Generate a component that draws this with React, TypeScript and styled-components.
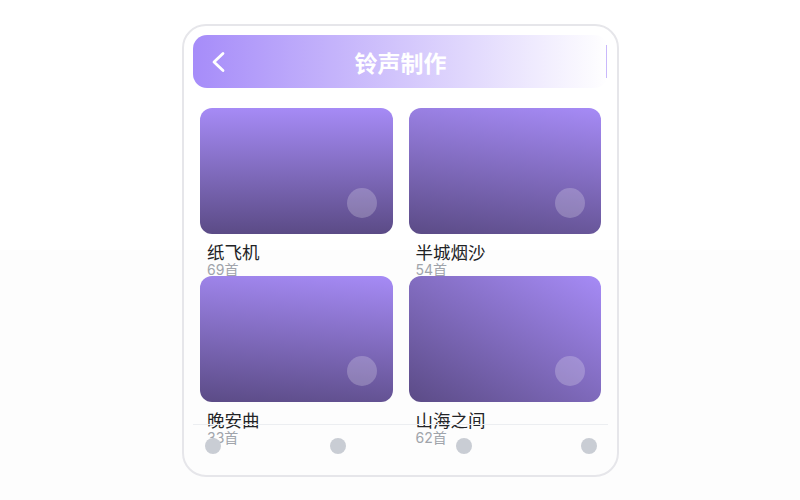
import styled, { createGlobalStyle } from "styled-components"

const GlobalStyle = createGlobalStyle`
html, body {
  margin: 0;
  padding: 0;
}
body {
  background: linear-gradient(180deg, #ffffff 0, #ffffff 250px, #fdfdfd 250px);
  font-family: Inter, "Noto Sans CJK SC", sans-serif;
}
`

const Stage = styled.div`
width: 800px;
height: 500px;
display: flex;
align-items: center;
justify-content: center;
`

const PhoneFrame = styled.div`
width: 437px;
height: 453px;
box-sizing: border-box;
border: 2px solid #e6e6ea;
border-radius: 24px;
padding: 9px 9px 0;
margin: 1px 0 0 1px;
position: relative;
overflow: hidden;
`

const Header = styled.header`
height: 53px;
border-radius: 14px;
background: linear-gradient(90deg, #a68cf9 0%, #ffffff 100%);
display: grid;
grid-template-columns: 44px 1fr 44px;
align-items: center;
`

const BackButton = styled.button`
width: 44px;
height: 53px;
border: none;
background: none;
padding: 0 0 0 5px;
display: flex;
align-items: center;
justify-content: center;
cursor: pointer;
`

const Title = styled.h1`
margin: 0;
text-align: center;
color: #ffffff;
font-family: Inter, "Noto Sans CJK SC", sans-serif;
font-size: 23px;
font-weight: 700;
`

const HeaderSlot = styled.div`
height: 33px;
border-right: 1px solid #c9b8fb;
margin-right: 1px;
`

const Grid = styled.div`
margin-top: 20px;
padding: 0 7px;
display: grid;
grid-template-columns: 1fr 1fr;
column-gap: 16px;
grid-auto-rows: 168px;
`

const Item = styled.div`
display: flex;
flex-direction: column;
min-width: 0;
`

const Cover = styled.div<{ $angle: number }>`
height: 126px;
border-radius: 12px;
background: linear-gradient(${(p) => p.$angle}deg, #a68bf6 0%, #5b4b86 100%);
position: relative;
flex-shrink: 0;
`

const PlayDot = styled.span`
position: absolute;
right: 16px;
bottom: 16px;
width: 30px;
height: 30px;
border-radius: 50%;
background: rgba(255, 255, 255, 0.22);
`

const Name = styled.div`
margin-top: 9px;
padding-left: 7px;
font-size: 17.5px;
line-height: 20px;
color: #222326;
white-space: nowrap;
`

const Count = styled.div`
padding-left: 7px;
font-size: 14px;
line-height: 14px;
color: #a0a4ab;
white-space: nowrap;
`

const BottomNav = styled.nav`
position: absolute;
left: 9px;
right: 9px;
bottom: 0;
height: 51px;
box-sizing: border-box;
border-top: 1px solid #eceef1;
padding: 13px 11px 0 12px;
display: flex;
justify-content: space-between;
align-items: flex-start;
`

const NavDot = styled.span`
width: 16px;
height: 16px;
border-radius: 50%;
background: #c9cdd4;
`

const ringtones = [
  { name: "纸飞机", count: 69, angle: 180 },
  { name: "半城烟沙", count: 54, angle: 188 },
  { name: "晚安曲", count: 33, angle: 185 },
  { name: "山海之间", count: 62, angle: 210 },
]

export default function App() {
  return (
    <Stage>
      <GlobalStyle />
      <PhoneFrame>
        <Header>
          <BackButton aria-label="返回">
            <svg width="16" height="22" viewBox="0 0 16 22">
              <path d="M13 2.5 L4 11 L13 19.5" fill="none" stroke="#ffffff" strokeWidth="2.8" strokeLinecap="round" strokeLinejoin="round" />
            </svg>
          </BackButton>
          <Title>铃声制作</Title>
          <HeaderSlot />
        </Header>

        <Grid>
          {ringtones.map((r) => (
            <Item key={r.name}>
              <Cover $angle={r.angle}>
                <PlayDot />
              </Cover>
              <Name>{r.name}</Name>
              <Count>{r.count}首</Count>
            </Item>
          ))}
        </Grid>

        <BottomNav>
          <NavDot />
          <NavDot />
          <NavDot />
          <NavDot />
        </BottomNav>
      </PhoneFrame>
    </Stage>
  )
}
